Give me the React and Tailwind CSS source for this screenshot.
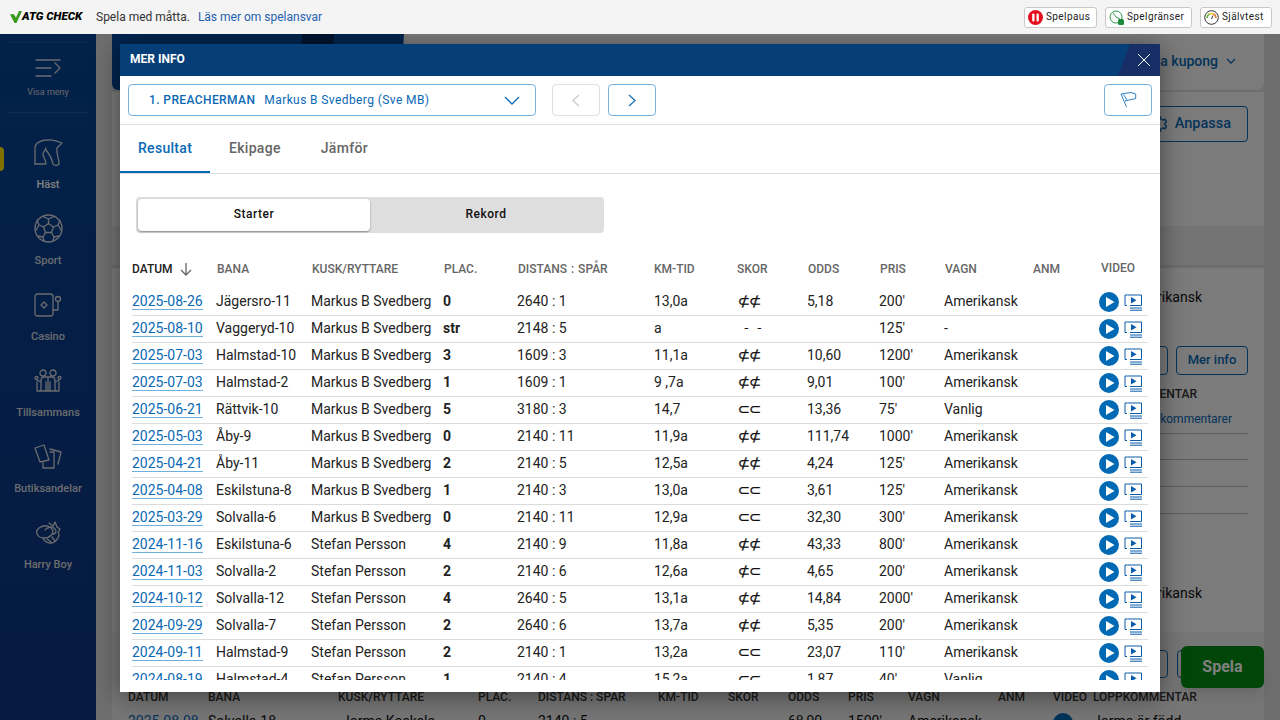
import React from 'react';

const rows = [
  ['2025-08-26', 'Jägersro-11', 'Markus B Svedberg', '0', '2640 : 1', '13,0a', '⊄⊄', '5,18', "200'", 'Amerikansk'],
  ['2025-08-10', 'Vaggeryd-10', 'Markus B Svedberg', 'str', '2148 : 5', 'a', '- -', '', "125'", '-'],
  ['2025-07-03', 'Halmstad-10', 'Markus B Svedberg', '3', '1609 : 3', '11,1a', '⊄⊄', '10,60', "1200'", 'Amerikansk'],
  ['2025-07-03', 'Halmstad-2', 'Markus B Svedberg', '1', '1609 : 1', '9 ,7a', '⊄⊄', '9,01', "100'", 'Amerikansk'],
  ['2025-06-21', 'Rättvik-10', 'Markus B Svedberg', '5', '3180 : 3', '14,7', '⊂⊂', '13,36', "75'", 'Vanlig'],
  ['2025-05-03', 'Åby-9', 'Markus B Svedberg', '0', '2140 : 11', '11,9a', '⊄⊄', '111,74', "1000'", 'Amerikansk'],
  ['2025-04-21', 'Åby-11', 'Markus B Svedberg', '2', '2140 : 5', '12,5a', '⊄⊄', '4,24', "125'", 'Amerikansk'],
  ['2025-04-08', 'Eskilstuna-8', 'Markus B Svedberg', '1', '2140 : 3', '13,0a', '⊂⊂', '3,61', "125'", 'Amerikansk'],
  ['2025-03-29', 'Solvalla-6', 'Markus B Svedberg', '0', '2140 : 11', '12,9a', '⊂⊂', '32,30', "300'", 'Amerikansk'],
  ['2024-11-16', 'Eskilstuna-6', 'Stefan Persson', '4', '2140 : 9', '11,8a', '⊄⊄', '43,33', "800'", 'Amerikansk'],
  ['2024-11-03', 'Solvalla-2', 'Stefan Persson', '2', '2140 : 6', '12,6a', '⊄⊂', '4,65', "200'", 'Amerikansk'],
  ['2024-10-12', 'Solvalla-12', 'Stefan Persson', '4', '2640 : 5', '13,1a', '⊄⊄', '14,84', "2000'", 'Amerikansk'],
  ['2024-09-29', 'Solvalla-7', 'Stefan Persson', '2', '2640 : 6', '13,7a', '⊄⊄', '5,35', "200'", 'Amerikansk'],
  ['2024-09-11', 'Halmstad-9', 'Stefan Persson', '2', '2140 : 1', '13,2a', '⊂⊂', '23,07', "110'", 'Amerikansk'],
  ['2024-08-19', 'Halmstad-4', 'Stefan Persson', '1', '2140 : 4', '15,2a', '⊂⊂', '1,87', "40'", 'Vanlig'],
];

const gridCols = 'grid grid-cols-[84px_95px_132px_74px_137px_83px_70px_72px_65px_88px_67px_49px]';
const bgCols = 'grid grid-cols-[80px_130px_140px_60px_120px_70px_60px_60px_60px_90px_55px_40px_1fr]';

const Stroke = ({ w, h, children, className = '' }) => (
  <svg width={w} height={h} viewBox={`0 0 ${w} ${h}`} fill="none" stroke="currentColor" strokeWidth="1.3" strokeLinecap="round" strokeLinejoin="round" className={className}>
    {children}
  </svg>
);

const HorseIcon = () => (
  <Stroke w={29} h={28}>
    <path d="M1 25V9C1 4 7 1 13 1C18 0 23 2 28 4L23 9C22 14 25 20 25 24C25 27 20 27 19 25C18 20 16 16 12 11" />
    <path d="M1 25H12C12 21 9 18 9 15C9 13 11 12 12 9" />
  </Stroke>
);

const SportIcon = () => (
  <Stroke w={29} h={29}>
    <circle cx="14.5" cy="14.5" r="13.5" />
    <path d="M14.5 9.5L19.5 13L17.5 18.5H11.5L9.5 13Z" />
    <path d="M14.5 9.5V5L9 2.5M14.5 5L20 2.5M19.5 13L24 11L26 6M24 11L27.5 17M9.5 13L5 11L3 6M5 11L1.5 17M11.5 18.5L9 23L10 27M17.5 18.5L20 23L19 27M9 23L4 22M20 23L25 22" />
  </Stroke>
);

const CasinoIcon = () => (
  <Stroke w={28} h={24}>
    <rect x="1" y="1" width="18" height="22" rx="2.5" />
    <path d="M10 9L13 12L10 15L7 12Z" />
    <path d="M19 17H24V9" />
    <circle cx="24" cy="6" r="2.5" />
  </Stroke>
);

const TogetherIcon = () => (
  <Stroke w={28} h={23}>
    <circle cx="9" cy="4" r="3" />
    <circle cx="19" cy="4" r="3" />
    <circle cx="2.5" cy="9" r="1.5" />
    <circle cx="25.5" cy="9" r="1.5" />
    <path d="M3 22V13M25 22V13M3 22H25M7 22V12C7 9 8 8 10 8H18C20 8 21 9 21 12V22M12 22V13M16 22V13M14 9V22M3 11L7 13M25 11L21 13" />
  </Stroke>
);

const SharesIcon = () => (
  <Stroke w={28} h={25}>
    <path d="M1 4L10 1L15 16L6 18Z" />
    <path d="M16 5L27 8L24 20" />
    <path d="M16 8H20V24H9V19" />
  </Stroke>
);

const HarryIcon = () => (
  <Stroke w={26} h={24}>
    <path d="M4 7C10 3 15 5 17 8C20 12 15 17 9 17C3 17 -1 11 4 7Z" />
    <path d="M10 9C12 6 18 5 20 8C22 10 21 13 18 13" />
    <path d="M14 2L18 5L20 1L22 6L25 8L23 12M24 13C24 18 19 23 14 22C11 21 9 20 8 17M12 18L16 21M17 16L20 20" />
  </Stroke>
);

const navItems = [
  ['Häst', HorseIcon],
  ['Sport', SportIcon],
  ['Casino', CasinoIcon],
  ['Tillsammans', TogetherIcon],
  ['Butiksandelar', SharesIcon],
  ['Harry Boy', HarryIcon],
];

const Sidebar = () => (
  <aside className="w-24 h-full shrink-0 bg-gradient-to-b from-[#044494] to-[#0e3480] flex flex-col items-center text-[#d4d8de]">
    <div className="w-20 h-[71px] mt-2 border-y border-white/10 flex flex-col items-center pt-4">
      <Stroke w={26} h={18}>
        <path d="M1 1H25M1 9H16M1 17H16M20 4L25 9L20 14" />
      </Stroke>
      <span className="text-[9px] leading-3 mt-[9px] text-[#ccd0d6]">Visa meny</span>
    </div>
    <nav className="w-full mt-[21px] flex flex-col relative">
      <div className="absolute left-0 top-[13px] w-1 h-6 bg-[#ffe100] rounded-r-sm" />
      {navItems.map(([label, Icon], i) => (
        <div key={label} className="h-[76px] flex flex-col items-center">
          <div className="h-[37px] w-full flex items-center justify-center">
            <Icon />
          </div>
          <span className={`text-[11px] leading-4 font-medium mt-[6px] ${i === 0 ? 'text-white' : 'text-[#d4d8de]'}`}>{label}</span>
        </div>
      ))}
    </nav>
  </aside>
);

const PageBehind = () => (
  <main className="flex-1 pl-4 pr-4 text-[#111] text-sm">
    <div className="flex h-14">
      <div className="w-[292px] bg-[#054a9e] rounded-bl-md [clip-path:polygon(0_0,100%_0,288px_100%,0_100%)]">
        <div className="w-8 h-2.5 ml-[190px] bg-[#02295c]" />
      </div>
      <div className="flex-1 bg-[#f6f6f6] rounded-b-md flex items-center justify-end pr-7 pb-0.5 gap-2 text-[#0a69b4] font-medium">
        <span>Visa kupong</span>
        <svg width="10" height="6" viewBox="0 0 10 6" fill="none" stroke="currentColor" strokeWidth="1.3"><path d="M1 1L5 5L9 1" /></svg>
      </div>
    </div>
    <div className="mt-0.5 h-[134px] bg-[#f6f6f6] flex justify-end pt-3.5 pr-4">
      <div className="w-[108px] h-9 border border-[#0a69b4] rounded flex items-center justify-end gap-[8px] pr-4 text-[14.5px] font-medium text-[#0a69b4]">
        <svg width="16" height="16" viewBox="0 0 16 16" fill="none" stroke="currentColor" strokeWidth="1.4" strokeLinejoin="round"><path d="M6.5 1H9.5L10 3.2L12 4.2L14 3.2L15.5 5.8L13.8 7.2V8.8L15.5 10.2L14 12.8L12 11.8L10 12.8L9.5 15H6.5L6 12.8L4 11.8L2 12.8L0.5 10.2L2.2 8.8V7.2L0.5 5.8L2 3.2L4 4.2L6 3.2Z" /></svg>
        Anpassa
      </div>
    </div>
    <div className="h-10 bg-[#e9e9e9] border-b border-[#d8d8d8]" />
    <div className="mt-0.5 h-[76px] bg-[#f6f6f6] flex items-center justify-end pr-[62px] pb-[18px]">Amerikansk</div>
    <div className="h-[212px] bg-[#f6f6f6] flex flex-col items-end pr-4 pt-0.5">
      <div className="flex gap-2">
        <div className="w-[72px] h-[29px] border border-[#0a69b4] rounded" />
        <div className="w-[72px] h-[29px] border border-[#0a69b4] rounded flex items-center justify-center text-[13px] font-medium text-[#0a69b4]">Mer info</div>
      </div>
      <span className="text-xs leading-4 font-medium mt-[11px] mr-[51px] text-[#333]">LOPPKOMMENTAR</span>
      <span className="text-xs leading-4 mt-[9px] mr-4 text-[#0a69b4] whitespace-nowrap">Visa kommentarer</span>
      <div className="w-[108px] h-[26px] border-t border-[#bbb] mt-[6px]" />
      <div className="w-[108px] h-[27px] border-t border-[#bbb]" />
      <div className="w-[108px] h-[27px] border-t border-[#bbb]" />
      <div className="w-[108px] h-[27px] border-t border-[#bbb]" />
    </div>
    <div className="h-[76px] bg-[#f6f6f6] flex items-center justify-end pr-[62px] pb-[2px]">Amerikansk</div>
    <div className="h-[88px] bg-[#ececec] px-4">
      <div className="flex justify-end items-start h-[57px] pt-[18px] -mr-4">
        <div className="w-7 h-7 border border-[#0a69b4] rounded mr-[9px]" />
        <div className="w-7 h-7 border border-[#0a69b4] rounded" />
        <div className="relative w-[83px] h-[42px] -mt-1 -ml-[24px] bg-[#008c10] rounded-md flex items-center justify-center text-base font-bold text-white shadow-lg">Spela</div>
      </div>
      <div className={`${bgCols} text-xs font-medium text-[#333] leading-4`}>
        {['DATUM', 'BANA', 'KUSK/RYTTARE', 'PLAC.', 'DISTANS : SPÅR', 'KM-TID', 'SKOR', 'ODDS', 'PRIS', 'VAGN', 'ANM', 'VIDEO', 'LOPPKOMMENTAR'].map((h) => (
          <span key={h}>{h}</span>
        ))}
      </div>
      <div className={`${bgCols} mt-2 leading-4 items-start`}>
        {['2025-08-08', 'Solvalla-18', 'Jorma Koskela', '0', '2140 : 5', '', '', '68,90', "1500'", 'Amerikansk', '', '', 'Jorma är född'].map((h, i) => (
          <span key={i} className={`${i === 0 ? 'text-[#0a69b4]' : ''} ${i === 2 ? 'pl-1' : ''} whitespace-nowrap`}>
            {i === 11 ? <span className="block w-5 h-5 rounded-full bg-[#0069b4]" /> : h}
          </span>
        ))}
      </div>
    </div>
  </main>
);

const HeaderCell = ({ children, active, className = '' }) => (
  <div className={`text-xs leading-4 font-medium [word-spacing:1px] ${active ? 'text-[#222] flex items-center gap-[7px]' : 'text-[#666] pl-px'} ${className}`}>{children}</div>
);

const PlayIcons = () => (
  <div className="flex items-center gap-[5px]">
    <svg width="20" height="20" viewBox="0 0 20 20">
      <circle cx="10" cy="10" r="10" fill="#0069b4" />
      <path d="M7 5L15.5 10L7 15Z" fill="#fff" />
    </svg>
    <svg width="18" height="17" viewBox="0 0 18 17" fill="none">
      <path d="M3.5 1H17.5V11.5H6M3.5 1H1V11.5H3" stroke="#0a5cab" strokeWidth="1" />
      <path d="M7 3V9.5L12.5 6.2Z" fill="#0a5cab" />
      <path d="M6 14H18M6 16.2H18" stroke="#0a5cab" strokeWidth="1" />
    </svg>
  </div>
);

const ResultRow = ({ row }) => {
  const [date, track, driver, place, dist, km, shoes, odds, prize, cart] = row;
  return (
    <div className={`${gridCols} h-[27px] items-center border-b border-[#dcdcdc] text-sm text-[#222] shrink-0`}>
      <a className="text-[#0a69b4] border-b border-[#6fb0dc] leading-[16px] w-fit mb-0.5">{date}</a>
      <span className="pb-0.5">{track}</span>
      <span className="pb-0.5">{driver}</span>
      <span className="pb-0.5 font-bold">{place}</span>
      <span className="pb-0.5">{dist}</span>
      <span className="pb-0.5">{km}</span>
      <span className={`pb-0.5 font-[family-name:'DejaVu_Sans'] text-[#111] ${shoes === '- -' ? 'text-[13px] whitespace-pre pl-[7px]' : 'text-[14.5px] pl-px tracking-[-1px] [-webkit-text-stroke:0.3px_#111]'}`}>
        {shoes === '- -' ? '-  -' : shoes}
      </span>
      <span className="pb-0.5">{odds}</span>
      <span className="pb-0.5">{prize}</span>
      <span className="pb-0.5">{cart}</span>
      <span />
      <PlayIcons />
    </div>
  );
};

const ResultTable = () => (
  <div className="mx-3 mt-[18px] h-[429px] overflow-hidden flex flex-col">
    <div className={`${gridCols} h-[38px] items-center pb-0.5 shrink-0`}>
      <HeaderCell active>
        DATUM
        <svg width="12" height="13" viewBox="0 0 12 13" fill="none" stroke="#666" strokeWidth="1.3"><path d="M6 0V12M1 7L6 12L11 7" /></svg>
      </HeaderCell>
      {['BANA', 'KUSK/RYTTARE', 'PLAC.', 'DISTANS : SPÅR'].map((h) => <HeaderCell key={h}>{h}</HeaderCell>)}
      <HeaderCell className="!pl-0">KM-TID</HeaderCell>
      <HeaderCell className="!pl-0">SKOR</HeaderCell>
      {['ODDS', 'PRIS', 'VAGN', 'ANM'].map((h) => <HeaderCell key={h}>{h}</HeaderCell>)}
      <HeaderCell className="!pl-0.5 -mt-0.5">VIDEO</HeaderCell>
    </div>
    {rows.map((row) => <ResultRow key={row[0] + row[1]} row={row} />)}
  </div>
);

const Modal = () => (
  <div className="w-[1040px] h-[648px] mt-2.5 bg-white shadow-[0_4px_24px_rgba(0,0,0,0.45)] flex flex-col">
    <div className="h-8 bg-[#063e77] flex items-center justify-between shrink-0">
      <span className="pl-2.5 pb-0.5 text-xs font-bold text-white">MER INFO</span>
      <div className="w-[42px] h-8 bg-[#172f66] [clip-path:polygon(0_100%,12px_0,100%_0,100%_100%)] flex items-center justify-end pr-[9px]">
        <svg width="14" height="14" viewBox="0 0 14 14" stroke="#fff" strokeWidth="1"><path d="M1 1L13 13M13 1L1 13" /></svg>
      </div>
    </div>
    <div className="h-[49px] border-b border-[#d9dfe3] px-2 pt-2 flex gap-4 shrink-0">
      <div className="w-[408px] h-8 border border-[#76b3de] rounded flex items-center pl-5 pr-[15px] text-xs tracking-[0.4px] text-[#0a69b4]">
        <span className="font-medium">1. PREACHERMAN</span>
        <span className="ml-[9px]">Markus B Svedberg (Sve MB)</span>
        <svg className="ml-auto" width="16" height="9" viewBox="0 0 16 9" fill="none" stroke="#0a69b4" strokeWidth="1.3"><path d="M1 1L8 8L15 1" /></svg>
      </div>
      <div className="flex gap-2">
        <div className="w-12 h-8 border border-[#dedede] rounded flex items-center justify-center">
          <svg width="8" height="13" viewBox="0 0 8 13" fill="none" stroke="#c8c8c8" strokeWidth="1.2"><path d="M7 1L1 6.5L7 12" /></svg>
        </div>
        <div className="w-12 h-8 border border-[#76b3de] rounded flex items-center justify-center">
          <svg width="8" height="13" viewBox="0 0 8 13" fill="none" stroke="#1f78bd" strokeWidth="1.4"><path d="M1 1L7 6.5L1 12" /></svg>
        </div>
      </div>
      <div className="ml-auto w-12 h-8 border border-[#76b3de] rounded flex items-center justify-center">
        <svg width="18" height="18" viewBox="0 0 18 18" fill="none" stroke="#2b83c6" strokeWidth="1" strokeLinejoin="round"><path d="M2 3L7.5 16M2 3L12 1.5L16.7 3V7.5L6 10M4.5 3.5L8 9" /></svg>
      </div>
    </div>
    <div className="h-[49px] border-b border-[#d5dee5] flex text-sm font-medium tracking-[0.3px] text-[#666] shrink-0">
      <div className="w-[90px] h-12 border-b-2 border-[#0069b4] text-[#0a69b4] pl-[18px] pt-[13px]">Resultat</div>
      <div className="pl-[19px] pt-[13px]">Ekipage</div>
      <div className="pl-10 pt-[13px]">Jämför</div>
    </div>
    <div className="mx-4 mt-[23px] w-[468px] h-9 bg-[#dedede] rounded p-0.5 flex text-xs font-medium tracking-[0.5px] text-[#111] shrink-0">
      <div className="w-[232px] pb-[3px] bg-white rounded shadow-[0_1px_2px_rgba(0,0,0,0.4)] flex items-center justify-center">Starter</div>
      <div className="flex-1 pb-[3px] flex items-center justify-center">Rekord</div>
    </div>
    <ResultTable />
  </div>
);

const TopButton = ({ icon, label, className = '' }) => (
  <div className={`h-[21px] bg-white border border-[#c8c8c8] rounded-[3px] flex items-center gap-[3px] pl-[3px] text-[10px] tracking-[0.4px] text-[#222] ${className}`}>
    {icon}
    {label}
  </div>
);

const TopBar = () => (
  <header className="h-[34px] bg-[#f4f4f4] relative z-10 flex items-center shrink-0 font-[family-name:Roboto] text-xs">
    <svg className="ml-2.5" width="12" height="12" viewBox="0 0 12 12"><path d="M0 3.5L3.5 3L6 6.5L9 0H12L6.5 12H4.5Z" fill="#3a9a1e" /></svg>
    <span className="italic font-black text-[11.5px] text-black w-[62px] whitespace-nowrap">ATG CHECK</span>
    <span className="ml-3 text-[#333]">Spela med måtta.</span>
    <span className="ml-2 text-[#1f62ad]">Läs mer om spelansvar</span>
    <div className="ml-auto mr-2 flex gap-2">
      <TopButton
        className="w-[73px]"
        label="Spelpaus"
        icon={
          <svg width="15" height="15" viewBox="0 0 15 15">
            <circle cx="7.5" cy="7.5" r="7.5" fill="#e30f1f" />
            <rect x="4.2" y="3.5" width="2.3" height="8" rx="1" fill="#fff" />
            <rect x="8.5" y="3.5" width="2.3" height="8" rx="1" fill="#fff" />
          </svg>
        }
      />
      <TopButton
        className="w-[87px]"
        label="Spelgränser"
        icon={
          <svg width="15" height="15" viewBox="0 0 15 15" fill="none">
            <circle cx="7" cy="7" r="6" stroke="#2c9a4a" strokeWidth="1" />
            <path d="M7 7L4 3M7 7L11 9" stroke="#2c9a4a" strokeWidth="1" />
            <rect x="9" y="9" width="6" height="6" rx="1.5" fill="#1e8a3c" />
          </svg>
        }
      />
      <TopButton
        className="w-[72px]"
        label="Självtest"
        icon={
          <svg width="15" height="15" viewBox="0 0 15 15" fill="none">
            <circle cx="7.5" cy="7.5" r="6.8" stroke="#333" strokeWidth="1" />
            <path d="M3 8A4.5 4.5 0 0 1 5.5 4" stroke="#6cb33f" strokeWidth="1.5" />
            <path d="M5.5 4A4.5 4.5 0 0 1 9.5 4" stroke="#f0c419" strokeWidth="1.5" />
            <path d="M9.5 4A4.5 4.5 0 0 1 12 8" stroke="#e8792b" strokeWidth="1.5" />
            <path d="M7.5 9L9 5.5" stroke="#333" strokeWidth="1" />
          </svg>
        }
      />
    </div>
  </header>
);

export default function App() {
  return (
    <div className="h-screen overflow-hidden flex flex-col bg-[#dcdcdc] font-[family-name:Roboto]">
      <TopBar />
      <div className="relative flex-1 min-h-0 flex">
        <Sidebar />
        <PageBehind />
        <div className="absolute inset-0 bg-black/50 flex justify-center items-start">
          <Modal />
        </div>
      </div>
    </div>
  );
}
